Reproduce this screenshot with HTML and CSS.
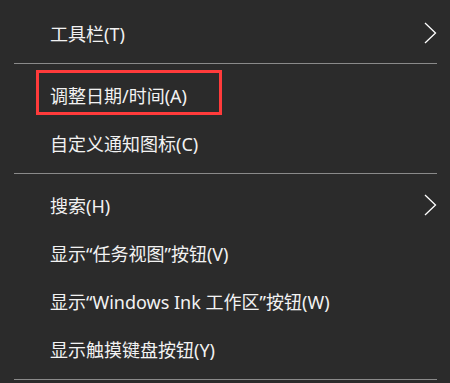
FILE: index.html
```html
<!DOCTYPE html>
<html lang="zh-CN">
<head>
    <meta charset="UTF-8">
    <meta name="viewport" content="width=device-width, initial-scale=1.0">
    <title>任务栏菜单</title>
    <link rel="stylesheet" href="styles.css">
</head>
<body>
    <div class="context-menu">
        <div class="menu-item">
            <span class="label">工具栏(T)</span>
            <svg class="arrow" width="14" height="22" viewBox="0 0 14 22">
                <polyline points="1,1 11.5,11 1,21" fill="none" stroke="#ffffff" stroke-width="1.3"/>
            </svg>
        </div>
        <div class="separator"></div>
        <div class="menu-item">
            <span class="label">调整日期/时间(A)</span>
            <span class="highlight"></span>
        </div>
        <div class="menu-item">
            <span class="label">自定义通知图标(C)</span>
        </div>
        <div class="separator"></div>
        <div class="menu-item">
            <span class="label">搜索(H)</span>
            <svg class="arrow" width="14" height="22" viewBox="0 0 14 22">
                <polyline points="1,1 11.5,11 1,21" fill="none" stroke="#ffffff" stroke-width="1.3"/>
            </svg>
        </div>
        <div class="menu-item">
            <span class="label">显示“任务视图”按钮(V)</span>
        </div>
        <div class="menu-item">
            <span class="label">显示“Windows Ink 工作区”按钮(W)</span>
        </div>
        <div class="menu-item">
            <span class="label">显示触摸键盘按钮(Y)</span>
        </div>
        <div class="separator"></div>
    </div>
</body>
</html>
```

FILE: styles.css
```css
/* 전체 배경 */
body, html {
    margin: 0;
    background-color: #2b2b2b;
    font-family: "Noto Sans", "Noto Sans CJK SC", sans-serif;
}

/* 메뉴 상자 */
.context-menu {
    width: 450px;
    padding-top: 9px;
    box-sizing: border-box;
}

.menu-item {
    position: relative;
    display: flex;
    align-items: center;
    height: 48px;
    padding: 0 12px 0 50px;
    color: #f2f2f2;
    font-size: 18px;
    white-space: nowrap;
}

.arrow {
    margin-left: auto;
}

/* 구분선 */
.separator {
    height: 1px;
    margin: 6px 13px 7px 14px;
    background-color: #8a8a8a;
}

/* 빨간 표시 상자 */
.highlight {
    position: absolute;
    left: 36px;
    top: -1px;
    width: 186px;
    height: 45px;
    border: 3px solid #ff3b3b;
    box-sizing: border-box;
}
```
